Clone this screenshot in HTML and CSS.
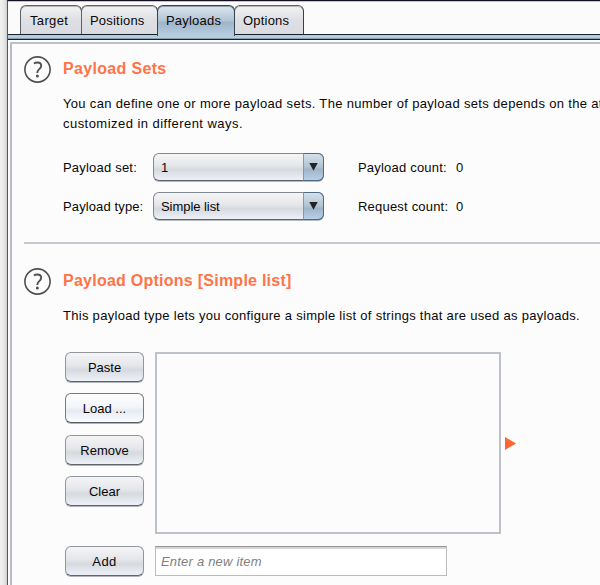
FILE: index.html
```
<!DOCTYPE html>
<html lang="en">
<head>
<meta charset="utf-8">
<title>Payloads</title>
<link rel="stylesheet" href="styles.css">
</head>
<body>
<div class="window">
  <nav class="tabs">
    <div class="tab target"><span>Target</span></div>
    <div class="tab positions"><span>Positions</span></div>
    <div class="tab payloads active"><span>Payloads</span></div>
    <div class="tab options"><span>Options</span></div>
  </nav>
  <div class="tab-strip"></div>
  <main class="panel">
    <section class="section sets">
      <svg class="help" width="27" height="27" viewBox="0 0 27 27" fill="none" stroke="#505050" stroke-width="1.6"><circle cx="13.5" cy="13.5" r="12.6"/><path d="M9.9 7.5c1-.7 2.1-1 3.4-1 2.4 0 3.9 1.2 3.9 3.3 0 3.3-3.8 3.3-3.8 6.4v.7" stroke-width="1.9"/><circle cx="13.4" cy="20" r="1.5" fill="#505050" stroke="none"/></svg>
      <div class="body">
        <h2>Payload Sets</h2>
        <p>You can define one or more payload sets. The number of payload sets depends on the at<br><span class="wide">customized in different ways.</span></p>
        <div class="settings">
          <span>Payload set:</span>
          <div class="combo"><span>1</span><i><svg width="9" height="8" viewBox="0 0 9 8"><path d="M.3 0h8.4L4.5 7.8z" fill="#222"/></svg></i></div>
          <span class="count">Payload count:</span>
          <span>0</span>
          <span class="type-label">Payload type:</span>
          <div class="combo"><span>Simple list</span><i><svg width="9" height="8" viewBox="0 0 9 8"><path d="M.3 0h8.4L4.5 7.8z" fill="#222"/></svg></i></div>
          <span class="count">Request count:</span>
          <span>0</span>
        </div>
      </div>
    </section>
    <section class="section choices">
      <svg class="help" width="27" height="27" viewBox="0 0 27 27" fill="none" stroke="#505050" stroke-width="1.6"><circle cx="13.5" cy="13.5" r="12.6"/><path d="M9.9 7.5c1-.7 2.1-1 3.4-1 2.4 0 3.9 1.2 3.9 3.3 0 3.3-3.8 3.3-3.8 6.4v.7" stroke-width="1.9"/><circle cx="13.4" cy="20" r="1.5" fill="#505050" stroke="none"/></svg>
      <div class="body">
        <h2>Payload Options [Simple list]</h2>
        <p>This payload type lets you configure a simple list of strings that are used as payloads.</p>
        <div class="editor">
          <div class="buttons">
            <div class="button"><span>Paste</span></div>
            <div class="button hover"><span>Load ...</span></div>
            <div class="button"><span>Remove</span></div>
            <div class="button"><span>Clear</span></div>
          </div>
          <div class="list"></div>
          <svg class="marker" width="11" height="13" viewBox="0 0 11 13"><path d="M0 0l11 6.5L0 13z" fill="#ff6633"/></svg>
        </div>
        <div class="add-row">
          <div class="button add"><span>Add</span></div>
          <div class="field"><span>Enter a new item</span></div>
        </div>
      </div>
    </section>
  </main>
</div>
</body>
</html>
```
FILE: styles.css
```
* { box-sizing: border-box; }
body {
  margin: 0;
  height: 585px;
  overflow: hidden;
  padding-left: 7px;
  background: linear-gradient(90deg, #f1f1f1 0, #e8e8e8 4px, #cfcfcf 7px);
  font: 13px/20px "Liberation Sans", Arial, sans-serif;
  color: #080808;
  white-space: nowrap;
}
.window {
  height: 585px;
  border-top: 1px solid #160f24;
  border-left: 1px solid #555;
  background: #fcfbfc;
  box-shadow: inset 0 1px #c5c1ce;
}
.tabs {
  display: flex;
  height: 33px;
  padding: 4px 0 0 12px;
}
.tab {
  height: 29px;
  padding-left: 9px;
  border: 1px solid #5e6268;
  border-right-color: #3a3e46;
  border-bottom: 0;
  border-radius: 6px 6px 0 0;
  background: linear-gradient(#f2f2f4, #dfe0e4 50%, #dadbe0);
  box-shadow: inset 0 1px #b8babe;
  line-height: 29px;
  letter-spacing: .2px;
}
.tab + .tab { margin-left: -1px; }
.target { width: 62px; letter-spacing: .35px; }
.positions { width: 77px; padding-left: 8px; }
.payloads { width: 78px; padding-left: 8px; }
.options { width: 70px; padding-left: 8px; }
.tab.active {
  position: relative;
  height: 31px;
  border-color: #344351;
  background: linear-gradient(#dce5ed, #b3c5d5 48%, #9fb5ca 55%, #b7cde0);
  box-shadow: inset 0 1px #8fa0af;
}
.tab-strip {
  height: 6px;
  border-top: 1px solid #15212c;
  border-bottom: 1px solid #15212c;
  background: linear-gradient(#b7cddd 75%, #86a1b2 75%);
}
.panel {
  height: 545px;
  margin: 2px 0 0 2px;
  padding: 12px 0 0 12px;
  border-top: 2px solid #bcbfc9;
  border-left: 2px solid #b7bbc5;
  background: #fcfcfc;
}
.section { display: flex; gap: 12px; }
.sets { height: 188px; border-bottom: 2px solid #c5c8cd; }
.choices { padding-top: 24px; }
.help { flex: none; }
h2 {
  margin: 3px 0 0;
  font-size: 16px;
  line-height: 20px;
  letter-spacing: .33px;
  color: #ff7348;
}
.choices h2 { letter-spacing: .25px; }
p { margin: 15px 0 0; letter-spacing: .33px; }
.choices p { letter-spacing: .29px; }
.wide { letter-spacing: .46px; }
.settings {
  display: grid;
  grid-template-columns: 90px 171px 132px auto;
  grid-auto-rows: 28px;
  row-gap: 11px;
  margin-top: 19px;
  line-height: 30px;
  letter-spacing: .2px;
}
.type-label { letter-spacing: .12px; }
.count { margin-left: 34px; }
.combo {
  display: flex;
  height: 28px;
  border: 1px solid #83878f;
  border-bottom-color: #5d626d;
  border-radius: 6px;
  background: linear-gradient(#f6f6f8, #e5e6ea 45%, #d6d9df 60%, #edf0f6);
  box-shadow: 0 1px #b4b8bf;
  line-height: 28px;
  letter-spacing: -.05px;
}
.combo span { flex: 1; padding-left: 7px; }
.combo i {
  display: flex;
  align-items: center;
  justify-content: center;
  width: 21px;
  margin: -1px -1px -1px 0;
  border: 1px solid #4f6b84;
  border-left-color: #8299ae;
  border-radius: 0 6px 6px 0;
  background: linear-gradient(#d5e1eb, #b1c3d3 50%, #9eb5ca 60%, #b9d0e6);
}
.editor { display: flex; height: 182px; margin: 26px 0 0 2px; }
.buttons { display: grid; grid-auto-rows: 30px; row-gap: 11.3px; }
.button {
  width: 79px;
  height: 30px;
  border: 1px solid #92959c;
  border-bottom-color: #5f646f;
  border-radius: 6px;
  background: linear-gradient(#f5f5f7, #e5e6ea 45%, #d6d9df 60%, #eef1f8);
  box-shadow: 0 1px #b0b3ba;
  line-height: 30px;
  text-align: center;
}
.button.hover {
  border-color: #777a86;
  border-bottom-color: #555968;
  background: linear-gradient(#fff, #f3f5f9 45%, #e7eaf2 60%, #fbfdff);
}
.add { letter-spacing: .4px; }
.list {
  width: 346px;
  margin-left: 11px;
  border: 2px solid #bcc1ca;
}
.marker { margin: 85px 0 0 4px; }
.add-row { display: flex; gap: 11px; margin: 12px 0 0 2px; }
.field {
  width: 292px;
  height: 30px;
  padding-left: 5px;
  border: 1px solid #bbb;
  border-top-color: #969696;
  background: #fff;
  box-shadow: inset 0 2px #d5d5d5;
  line-height: 29px;
  font-style: italic;
  letter-spacing: .2px;
  color: #808080;
}
```
